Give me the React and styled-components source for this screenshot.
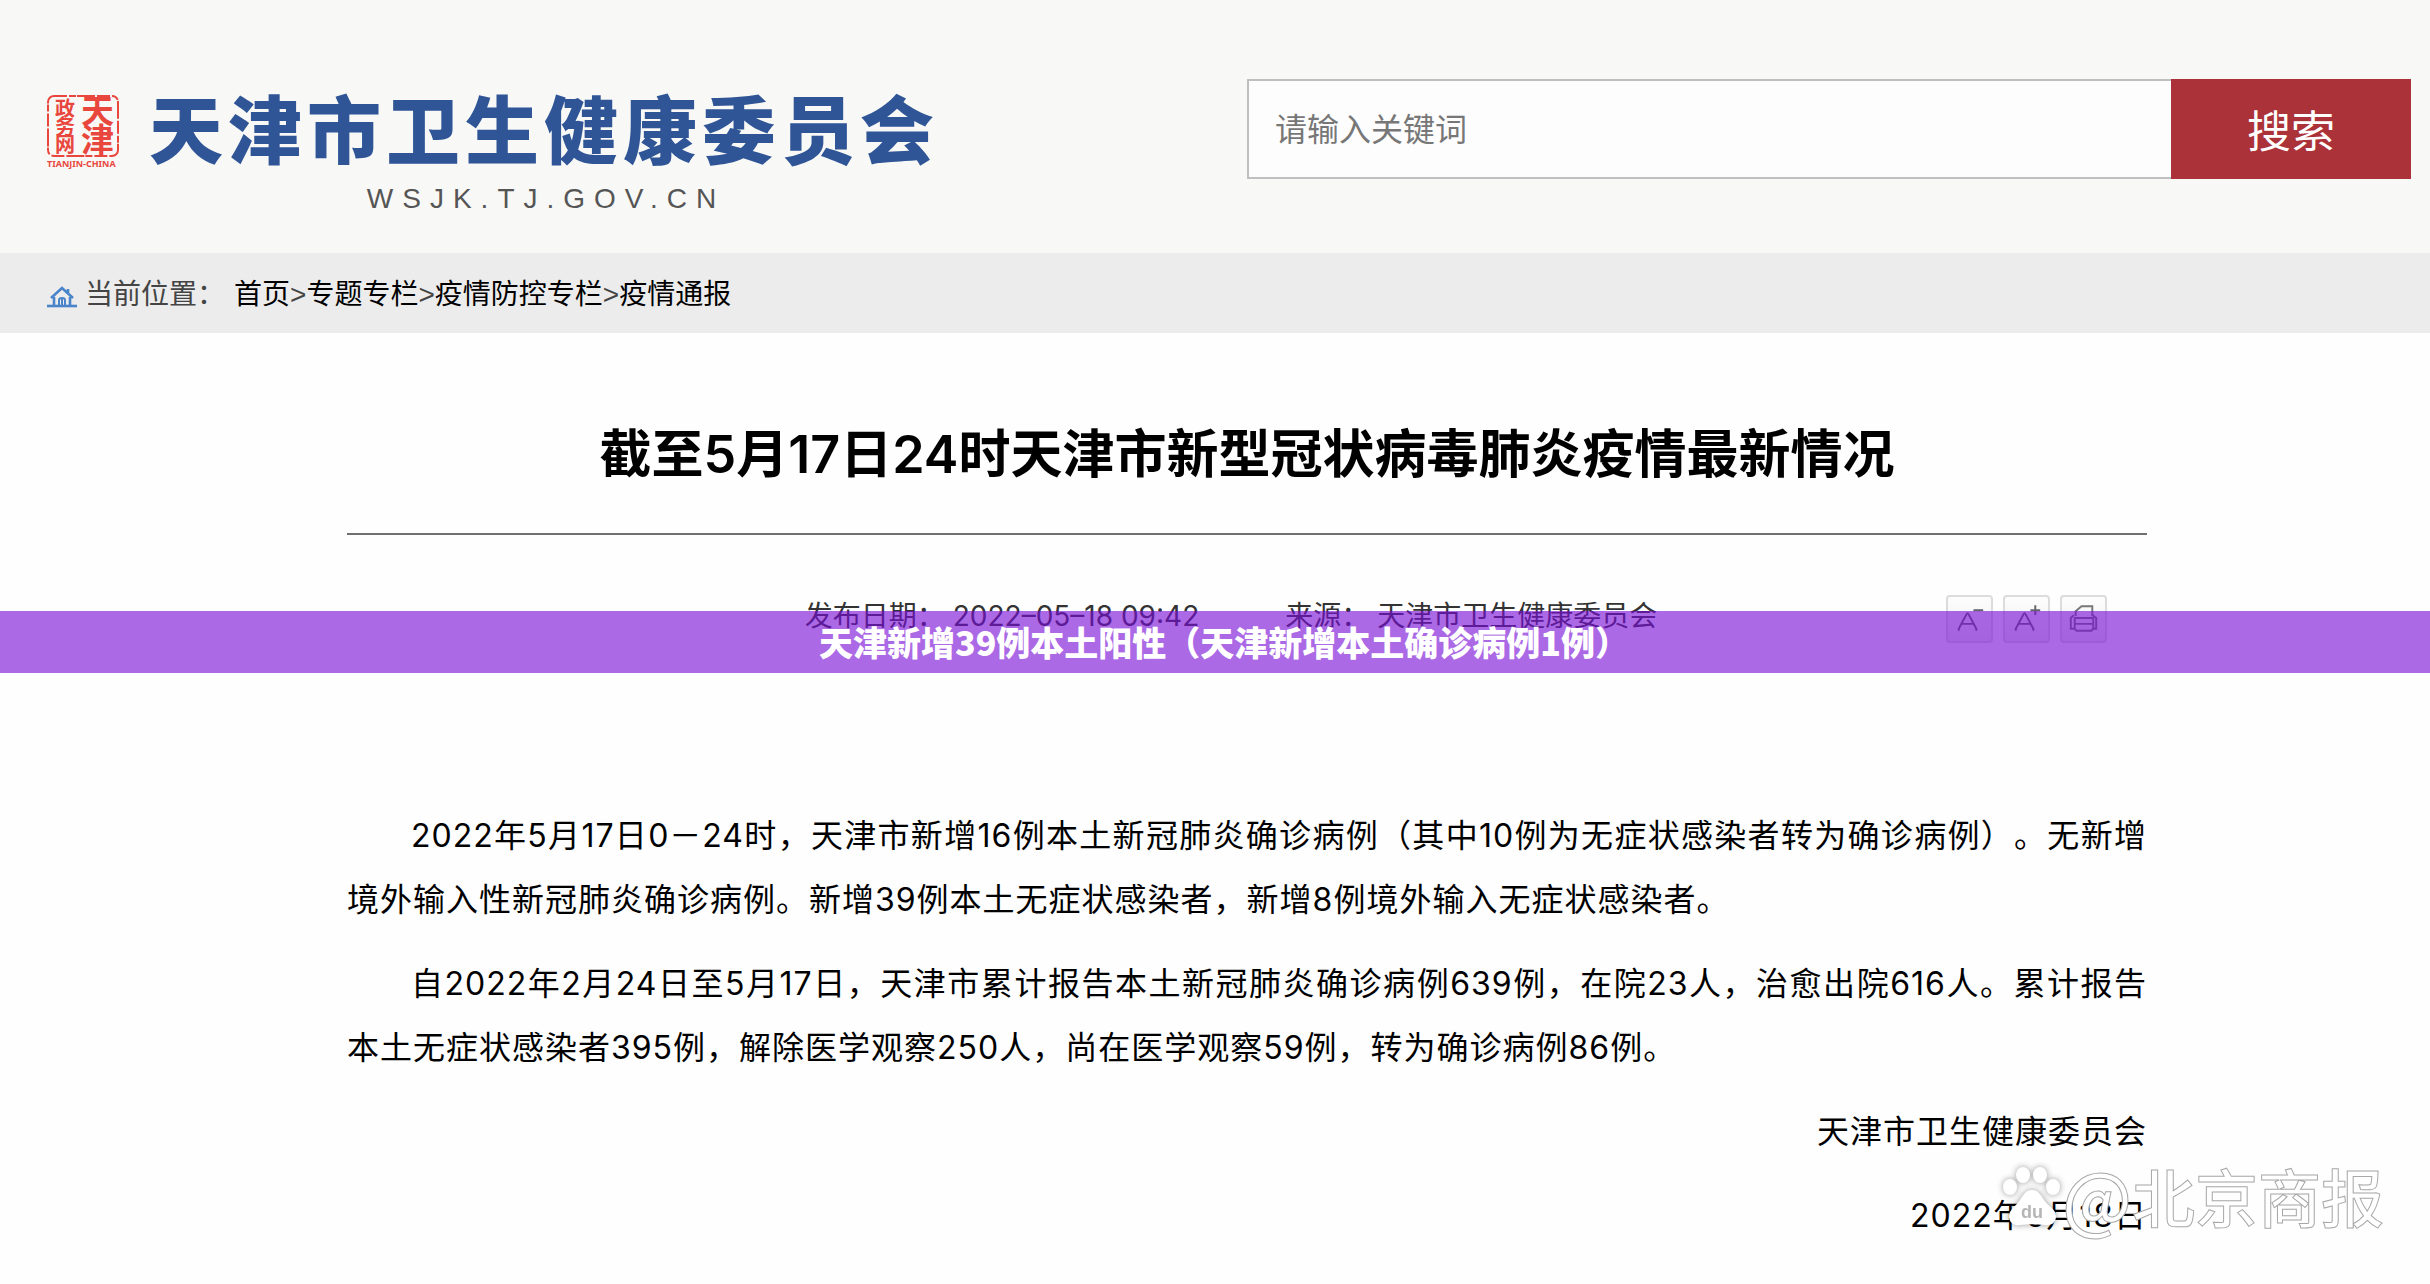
import styled, { createGlobalStyle } from "styled-components";

const crumbs = ["首页", "专题专栏", "疫情防控专栏", "疫情通报"];

const paragraphs = [
  "2022年5月17日0－24时，天津市新增16例本土新冠肺炎确诊病例（其中10例为无症状感染者转为确诊病例）。无新增境外输入性新冠肺炎确诊病例。新增39例本土无症状感染者，新增8例境外输入无症状感染者。",
  "自2022年2月24日至5月17日，天津市累计报告本土新冠肺炎确诊病例639例，在院23人，治愈出院616人。累计报告本土无症状感染者395例，解除医学观察250人，尚在医学观察59例，转为确诊病例86例。",
];

const Seal = () => (
  <SealMark width="72" height="74" viewBox="0 0 72 74" aria-hidden="true">
    <rect
      x="1"
      y="1"
      width="70"
      height="60"
      rx="6"
      fill="none"
      stroke="#e9473d"
      strokeWidth="2"
      strokeDasharray="13 2 7 1 18 2"
    />
    <g fill="#e9473d" fontFamily="'Noto Sans CJK SC', sans-serif" fontWeight="700">
      <text x="8" y="21" fontSize="20">政</text>
      <text x="8" y="39" fontSize="20">务</text>
      <text x="8" y="57" fontSize="20">网</text>
      <text x="34" y="28" fontSize="33">天</text>
      <text x="34" y="57" fontSize="33">津</text>
    </g>
    <text
      x="0"
      y="72"
      fill="#e9473d"
      fontFamily="'Noto Sans', sans-serif"
      fontWeight="700"
      fontSize="9"
    >
      TIANJIN-CHINA
    </text>
  </SealMark>
);

const HomeIcon = () => (
  <svg
    width="30"
    height="30"
    viewBox="0 0 30 30"
    fill="none"
    stroke="#4a84cb"
    strokeWidth="2.6"
    aria-hidden="true"
  >
    <path d="M0 27h30" />
    <path d="M4 19 15 9l11 10M21 10v4" />
    <path d="M7 18v9M23 18v9" />
    <path d="M12 27v-6q0-2 3-2t3 2v6M15 20v7" strokeWidth="2" />
  </svg>
);

const FontIcon = ({ plus }) => (
  <svg width="43" height="44" viewBox="0 0 44 44" fill="none" stroke="#666" aria-hidden="true">
    <path d="M11 34v-2l8-15q1-2 2 0l8 15v2M14 27h12" strokeWidth="2" />
    <path d={plus ? "M26 13h10M31 8v10" : "M26 13h10"} strokeWidth="2" />
  </svg>
);

const PrintIcon = () => (
  <svg width="43" height="44" viewBox="0 0 44 44" fill="none" stroke="#777" aria-hidden="true">
    <path d="M14 19v-5l6-5h11v10" strokeWidth="2" />
    <path d="M12 18 9 21v11h4M31 18l4 3v11h-4" strokeWidth="2" />
    <path d="M14 21h17M14 27h17M13 20v12l2 2h15l2-2V20" strokeWidth="2" />
  </svg>
);

const Paw = () => (
  <PawMark width="62" height="66" viewBox="0 0 62 66" aria-hidden="true">
    <ellipse cx="23" cy="13" rx="7" ry="8" />
    <ellipse cx="40" cy="13" rx="7" ry="8" />
    <ellipse cx="10" cy="25" rx="7" ry="8" />
    <ellipse cx="53" cy="25" rx="7" ry="8" />
    <path d="M32 28c6 0 9 5 12 10s12 9 12 16-5 10-12 9c-8-1-16-1-24 0-7 1-11-3-11-9s7-10 11-16 6-10 12-10Z" />
    <text
      x="32"
      y="56"
      textAnchor="middle"
      fill="#b5b5b5"
      fontFamily="'Liberation Sans', sans-serif"
      fontWeight="700"
      fontSize="18"
    >
      du
    </text>
  </PawMark>
);

const App = () => {
  return (
    <Page>
      <GlobalStyle />
      <Header>
        <Logo href="#">
          <Seal />
          <LogoText>
            <LogoName>天津市卫生健康委员会</LogoName>
            <LogoDomain>WSJK.TJ.GOV.CN</LogoDomain>
          </LogoText>
        </Logo>
        <SearchForm onSubmit={(e) => e.preventDefault()}>
          <SearchInput type="text" aria-label="请输入关键词" placeholder="请输入关键词" />
          <SearchButton type="submit">搜索</SearchButton>
        </SearchForm>
      </Header>
      <Breadcrumb>
        <HomeIcon />
        <BreadcrumbLabel>当前位置：</BreadcrumbLabel>
        <div>
          {crumbs.map((crumb, i) => (
            <span key={crumb}>
              {i > 0 && <Separator>&gt;</Separator>}
              <CrumbLink href="#">{crumb}</CrumbLink>
            </span>
          ))}
        </div>
      </Breadcrumb>
      <Article>
        <Title>截至5月17日24时天津市新型冠状病毒肺炎疫情最新情况</Title>
        <MetaRow>
          <Meta>
            <MetaItem>
              <span>发布日期：</span>
              <span>2022–05–18 09:42</span>
            </MetaItem>
            <MetaItem>
              <span>来源：</span>
              <span>天津市卫生健康委员会</span>
            </MetaItem>
          </Meta>
          <Tools>
            <ToolButton type="button" aria-label="缩小字号">
              <FontIcon />
            </ToolButton>
            <ToolButton type="button" aria-label="放大字号">
              <FontIcon plus />
            </ToolButton>
            <ToolButton type="button" aria-label="打印">
              <PrintIcon />
            </ToolButton>
          </Tools>
        </MetaRow>
        <Body>
          {paragraphs.map((text) => (
            <Paragraph key={text}>{text}</Paragraph>
          ))}
          <Signature>天津市卫生健康委员会</Signature>
          <Signature>2022年5月18日</Signature>
        </Body>
      </Article>
      <Banner>天津新增39例本土阳性（天津新增本土确诊病例1例）</Banner>
      <Watermark>
        <Paw />
        <WatermarkAt>@</WatermarkAt>
        <WatermarkName>北京商报</WatermarkName>
      </Watermark>
    </Page>
  );
};

export default App;

const GlobalStyle = createGlobalStyle`
  * {
    box-sizing: border-box;
  }

  body {
    margin: 0;
    background: #fefefe;
    color: #000000;
    font-family: Inter, "Noto Sans CJK SC", sans-serif;
    text-spacing-trim: space-all;
  }
`;

const Page = styled.div`
  position: relative;
  min-height: 100vh;
  overflow: hidden;
`;

const Header = styled.header`
  display: flex;
  justify-content: space-between;
  align-items: flex-start;
  padding: 79px 19px 38px 47px;
  background: #f8f8f6;
`;

const Logo = styled.a`
  display: flex;
  align-items: flex-start;
  gap: 30px;
  padding-top: 10px;
  text-decoration: none;
`;

const SealMark = styled.svg`
  margin-top: 6px;
`;

const LogoText = styled.span`
  display: flex;
  flex-direction: column;
  align-items: center;
  gap: 20px;
`;

const LogoName = styled.span`
  color: #2f5597;
  font-family: "Noto Sans CJK SC", sans-serif;
  font-size: 74px;
  font-weight: 900;
  line-height: 74px;
  letter-spacing: 5px;
  white-space: nowrap;
`;

const LogoDomain = styled.span`
  padding-left: 4px;
  color: #555555;
  font-family: "Liberation Sans", sans-serif;
  font-size: 28px;
  line-height: 32px;
  letter-spacing: 9px;
`;

const SearchForm = styled.form`
  display: flex;
  width: calc(50% - 18px);
  height: 100px;
`;

const SearchInput = styled.input`
  flex: 1;
  min-width: 0;
  padding: 0 26px;
  border: 2px solid #bfbfbf;
  border-right: none;
  border-radius: 0;
  background: #fdfdfd;
  color: #333333;
  font-family: inherit;
  font-size: 32px;
  outline: none;

  &::placeholder {
    color: #777777;
  }
`;

const SearchButton = styled.button`
  width: 240px;
  padding: 0;
  border: none;
  background: #ab3238;
  color: #ffffff;
  font-family: inherit;
  font-size: 44px;
  cursor: pointer;
`;

const Breadcrumb = styled.nav`
  display: flex;
  align-items: center;
  height: 80px;
  padding: 2px 47px 0;
  background: #ececec;
  color: #444444;
  font-size: 28px;
  line-height: 40px;
`;

const BreadcrumbLabel = styled.span`
  margin: 0 9px 0 8px;
`;

const Separator = styled.span`
  font-family: "Liberation Sans", sans-serif;
`;

const CrumbLink = styled.a`
  color: #000000;
  text-decoration: none;
`;

const Article = styled.article`
  padding: 86px 283px 35px 347px;
`;

const Title = styled.h1`
  margin: 0;
  padding-bottom: 42px;
  border-bottom: 2px solid #707070;
  font-size: 52px;
  font-weight: 600;
  line-height: 72px;
  text-align: center;
`;

const MetaRow = styled.div`
  display: grid;
  grid-template-columns: 1fr auto 1fr;
  align-items: start;
  margin-top: 60px;
`;

const Meta = styled.div`
  grid-column: 2;
  display: flex;
  gap: 86px;
  padding-top: 1px;
  padding-right: 32px;
  color: #333333;
  font-size: 28px;
  line-height: 40px;
`;

const MetaItem = styled.div`
  display: flex;
  gap: 8px;
`;

const Tools = styled.div`
  display: flex;
  justify-content: flex-end;
  gap: 10px;
  padding-right: 40px;
`;

const ToolButton = styled.button`
  display: flex;
  width: 47px;
  height: 48px;
  padding: 0;
  border: 2px solid #dcdcdc;
  border-radius: 4px;
  background: linear-gradient(#fdfdfd, #eeeeee);
  cursor: pointer;
`;

const Body = styled.div`
  display: flex;
  flex-direction: column;
  gap: 20px;
  margin-top: 161px;
  font-size: 32px;
  line-height: 64px;
  letter-spacing: 1px;
`;

const Paragraph = styled.p`
  margin: 0;
  text-align: justify;
  text-indent: 2em;
`;

const Signature = styled.p`
  margin: 0;
  text-align: right;
`;

const Banner = styled.div`
  position: absolute;
  top: 611px;
  left: 0;
  right: 0;
  padding-left: 18px;
  background: rgba(119, 13, 213, 0.62);
  color: #ffffff;
  font-family: "Noto Sans CJK SC", sans-serif;
  font-size: 34px;
  font-weight: 900;
  line-height: 62px;
  text-align: center;
`;

const Watermark = styled.div`
  position: absolute;
  right: 46px;
  bottom: 53px;
  display: flex;
  align-items: center;
  color: #ffffff;
  font-family: "Noto Sans CJK SC", sans-serif;
  font-size: 63px;
  font-weight: 500;
  line-height: 72px;
`;

const WatermarkName = styled.span`
  -webkit-text-stroke: 1px #a8a8a8;
`;

const WatermarkAt = styled(WatermarkName)`
  font-size: 72px;
`;

const PawMark = styled.svg`
  fill: #ffffff;
  filter: drop-shadow(0 0 3px rgba(0, 0, 0, 0.4));
`;
